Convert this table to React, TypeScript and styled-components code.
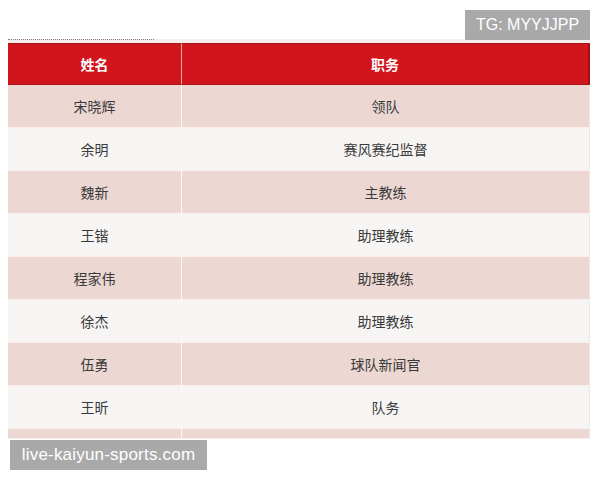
import React from "react";
import styled, { createGlobalStyle } from "styled-components";

const GlobalStyle = createGlobalStyle`
    html, body {
        margin: 0;
        padding: 0;
        background: #ffffff;
    }
    body {
        font-family: "Noto Sans CJK SC", "Noto Sans", sans-serif;
    }
`;

const Page = styled.div`
    position: relative;
    width: 600px;
    height: 480px;
    overflow: hidden;
    padding: 39px 10px 0 8px;
    box-sizing: border-box;
`;

const TopStrip = styled.div`
    height: 4px;
    width: 582px;
    background: #f6eded;
    display: flex;
    &::before {
        content: "";
        width: 146px;
        height: 1px;
        border-top: 1px dotted #8a7a7a;
    }
`;

const Table = styled.div`
    display: grid;
    grid-template-columns: 174px 1fr;
    width: 582px;
`;

const HeadCell = styled.div<{ $last?: boolean }>`
    height: 42px;
    display: flex;
    align-items: center;
    justify-content: center;
    background: #d0151c;
    color: #ffffff;
    font-weight: 700;
    font-size: 14px;
    border-top: 1px solid #a8121a;
    border-bottom: 1px solid #a8121a;
    border-right: ${(p) => (p.$last ? "2px solid #9e1118" : "1px solid #e9a9a9")};
    box-sizing: border-box;
`;

const Cell = styled.div<{ $pink: boolean; $last?: boolean; $short?: boolean }>`
    height: ${(p) => (p.$short ? "10px" : "43px")};
    display: flex;
    align-items: center;
    justify-content: center;
    background: ${(p) => (p.$pink ? "#ecd7d3" : "#f6f5f4")};
    color: #3a3a3a;
    font-size: 14px;
    border-bottom: 1px solid #fbf0ee;
    border-right: ${(p) => (p.$last ? "1px solid #f0e6e4" : "1px solid #fdf6f4")};
    box-sizing: border-box;
`;

const Badge = styled.div<{ $size: number }>`
    position: absolute;
    background: #a9a9a9;
    color: #ffffff;
    font-family: "Liberation Sans", Arial, sans-serif;
    font-size: ${(p) => p.$size}px;
    display: flex;
    align-items: center;
    justify-content: center;
    box-sizing: border-box;
`;

const TopBadge = styled(Badge)`
    top: 10px;
    left: 465px;
    width: 125px;
    height: 30px;
`;

const BottomBadge = styled(Badge)`
    top: 440px;
    left: 10px;
    width: 197px;
    height: 30px;
    letter-spacing: 0.2px;
`;

const rows: [string, string][] = [
    ["宋晓辉", "领队"],
    ["余明", "赛风赛纪监督"],
    ["魏新", "主教练"],
    ["王锴", "助理教练"],
    ["程家伟", "助理教练"],
    ["徐杰", "助理教练"],
    ["伍勇", "球队新闻官"],
    ["王昕", "队务"],
];

export default function App() {
    return (
        <>
            <GlobalStyle />
            <Page>
                <TopStrip />
                <Table>
                    <HeadCell>姓名</HeadCell>
                    <HeadCell $last>职务</HeadCell>
                    {rows.map(([name, role], i) => (
                        <React.Fragment key={name + i}>
                            <Cell $pink={i % 2 === 0}>{name}</Cell>
                            <Cell $pink={i % 2 === 0} $last>
                                {role}
                            </Cell>
                        </React.Fragment>
                    ))}
                    <Cell $pink $short />
                    <Cell $pink $short $last />
                </Table>
                <TopBadge $size={16}>TG: MYYJJPP</TopBadge>
                <BottomBadge $size={17}>live-kaiyun-sports.com</BottomBadge>
            </Page>
        </>
    );
}
